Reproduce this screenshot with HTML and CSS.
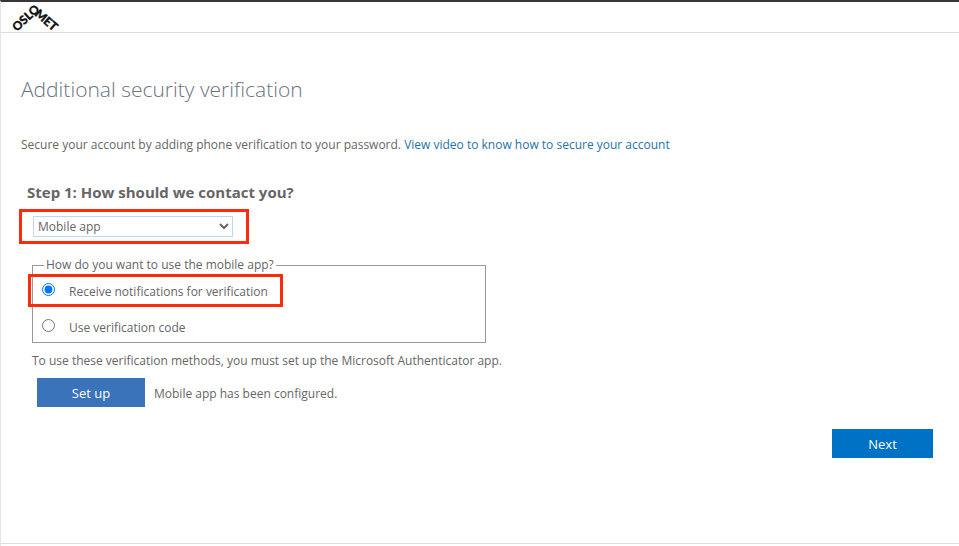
FILE: index.html
```html
<!DOCTYPE html>
<html lang="en">
<head>
    <meta charset="UTF-8">
    <meta name="viewport" content="width=device-width, initial-scale=1.0">
    <title>Additional security verification</title>
    <link rel="stylesheet" href="styles.css">
</head>
<body>
    <header class="header">
        <svg class="logo" width="60" height="30" viewBox="0 0 60 30" role="img" aria-label="OsloMet">
            <text class="logo-text" transform="translate(12 30) rotate(-43)">OSLO</text>
            <text class="logo-text" transform="translate(29 13) rotate(41)">MET</text>
        </svg>
    </header>

    <main class="content">
        <h1 class="title">Additional security verification</h1>
        <p class="intro">Secure your account by adding phone verification to your password. <a href="#">View video to know how to secure your account</a></p>

        <form class="form">
            <h2 class="step"><label for="method">Step 1: How should we contact you?</label></h2>
            <div class="method">
                <select id="method" class="method-select">
                    <option>Mobile app</option>
                    <option>Authentication phone</option>
                    <option>Office phone</option>
                </select>
            </div>

            <div class="details">
                <fieldset class="usage">
                    <legend>How do you want to use the mobile app?</legend>
                    <div class="option highlighted">
                        <input type="radio" id="notify" name="usage" checked>
                        <label for="notify">Receive notifications for verification</label>
                    </div>
                    <div class="option">
                        <input type="radio" id="code" name="usage">
                        <label for="code">Use verification code</label>
                    </div>
                </fieldset>
                <p class="note">To use these verification methods, you must set up the Microsoft Authenticator app.</p>
                <div class="setup">
                    <button type="button" class="btn btn-setup">Set up</button>
                    <span>Mobile app has been configured.</span>
                </div>
            </div>

            <div class="actions">
                <button type="button" class="btn btn-next">Next</button>
            </div>
        </form>
    </main>

    <footer class="footer"></footer>
</body>
</html>
```

FILE: styles.css
```css
* {
    box-sizing: border-box;
}

body {
    display: flex;
    flex-direction: column;
    min-height: 100vh;
    margin: 0;
    border-top: 2px solid #39363d;
    border-left: 1px solid #e6e6e6;
    background: #fff;
    color: #666;
    font-family: "Open Sans", "Noto Sans", sans-serif;
    font-size: 12px;
    line-height: 16px;
}

.header {
    height: 31px;
    padding-left: 4px;
    border-bottom: 1px solid #d9dde1;
}

.logo {
    display: block;
    overflow: visible;
}

.logo-text {
    fill: #111;
    stroke: #111;
    stroke-width: 0.3px;
    font-family: Lato, "Open Sans", sans-serif;
    font-size: 12px;
    font-weight: 900;
}

.content {
    flex: 1;
    padding: 40px 26px 0 20px;
}

.title {
    margin: 0;
    color: #6b737c;
    font-size: 21px;
    font-weight: 300;
    line-height: 32px;
}

.intro {
    margin: 32px 0 0;
}

.intro a {
    color: #2672a8;
    text-decoration: none;
}

.step {
    margin: 27px 0 0 6px;
    font-size: 15px;
    line-height: 24px;
}

/* red frames mark the choices to make */
.method {
    width: 230px;
    margin: 5px 0 0 -2px;
    padding: 4px 11px;
    border: 3px solid #fb2c0b;
}

.method-select {
    display: block;
    width: 200px;
    height: 21px;
    padding: 0;
    border: 1px solid #bcd9ee;
    background: #fff;
    color: #666;
    font: inherit;
}

.details {
    margin: 13px 0 0 11px;
}

.usage {
    width: 454px;
    margin: 0;
    padding: 5px 9px 0;
    border: 1px solid #999;
}

.usage legend {
    margin-left: 2px;
    padding: 0 2px;
}

.option {
    display: flex;
    align-items: center;
    gap: 14px;
    position: relative;
    height: 28px;
}

.option + .option {
    margin-top: 8px;
}

.option input {
    width: 13px;
    height: 13px;
    margin: 0 0 6px;
}

.highlighted::after {
    content: "";
    position: absolute;
    top: -4px;
    left: -14px;
    box-sizing: border-box;
    width: 255px;
    height: 33px;
    border: 3px solid #fb2c0b;
    pointer-events: none;
}

.note {
    margin: 10px 0 9px;
}

.setup {
    display: flex;
    align-items: baseline;
    gap: 9px;
    padding-left: 5px;
}

.btn {
    height: 29px;
    padding: 0;
    border: 0;
    color: #fff;
    font: inherit;
    font-size: 13px;
    cursor: pointer;
}

.btn-setup {
    width: 108px;
    background: #3a73b9;
}

.btn-next {
    width: 101px;
    background: #0072c6;
}

.actions {
    display: flex;
    justify-content: flex-end;
    margin-top: 22px;
}

.footer {
    height: 3px;
    border-top: 1px solid #dcdcdc;
}
```
